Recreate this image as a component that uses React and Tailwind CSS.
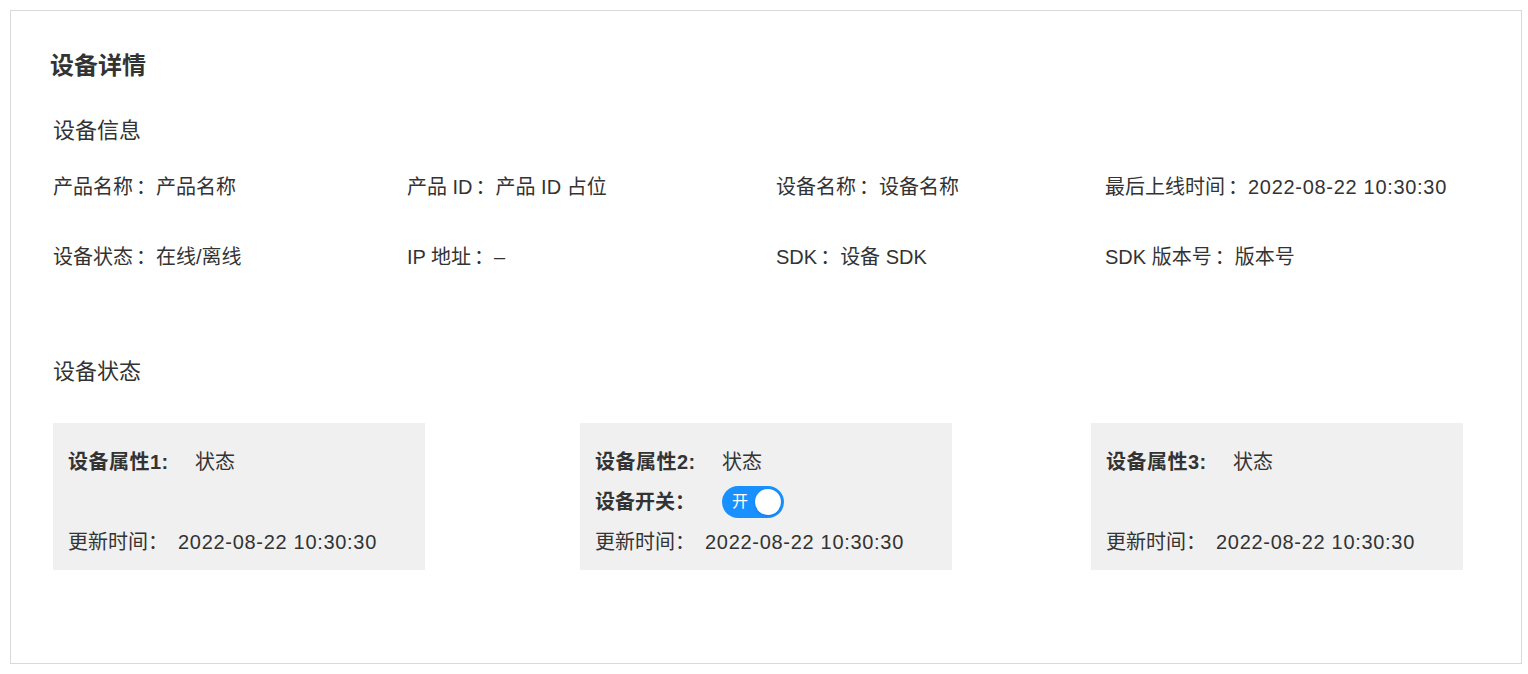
const fields = [
  { label: '产品名称', value: '产品名称' },
  { label: '产品 ID', value: '产品 ID 占位' },
  { label: '设备名称', value: '设备名称' },
  { label: '最后上线时间', value: '2022-08-22 10:30:30', isDate: true },
  { label: '设备状态', value: '在线/离线' },
  { label: 'IP 地址', value: '–' },
  { label: 'SDK', value: '设备 SDK' },
  { label: 'SDK 版本号', value: '版本号' },
];

const props = [
  { name: '设备属性1:', status: '状态', hasSwitch: false },
  { name: '设备属性2:', status: '状态', hasSwitch: true },
  { name: '设备属性3:', status: '状态', hasSwitch: false },
];

function Switch({ checked }) {
  return (
    <button
      type="button"
      className={`flex h-[32px] w-[62px] items-center rounded-full px-[3px] ${
        checked ? 'bg-[#1890ff]' : 'bg-[#bfbfbf]'
      }`}
    >
      <span className="ml-[7px] flex-1 text-left text-[16px] leading-none text-white">开</span>
      <span className="h-[26px] w-[26px] rounded-full bg-white shadow-sm" />
    </button>
  );
}

function PropCard({ item, className = '' }) {
  return (
    <div className={`h-[147px] w-[372px] bg-[#f0f0f0] px-[15px] pt-[19px] ${className}`}>
      <div className="flex h-[40px] items-center">
        <span className="w-[127px] font-bold tracking-[0.5px]">{item.name}</span>
        <span>{item.status}</span>
      </div>
      <div className="flex h-[40px] items-center">
        {item.hasSwitch && (
          <>
            <span className="w-[127px] font-bold">设备开关：</span>
            <Switch checked />
          </>
        )}
      </div>
      <div className="flex h-[40px] items-center">
        <span>更新时间：</span>
        <span className="ml-[10px] tracking-[0.7px]">2022-08-22 10:30:30</span>
      </div>
    </div>
  );
}

export default function App() {
  return (
    <div
      className="bg-white py-[10px] pl-[10px] pr-[6px] text-[#333]"
      style={{ fontFamily: '"Liberation Sans", "Noto Sans CJK SC", sans-serif' }}
    >
      <div className="h-[654px] border border-[#d9d9d9]">
        <h1 className="pl-[39px] pt-[39px] text-[24px] font-bold leading-[32px]">设备详情</h1>

        <div className="pl-[42px]">
          <h2 className="mt-[33px] text-[22px] leading-[32px]">设备信息</h2>

          <div className="mt-[25px] grid grid-cols-[354px_369px_329px_1fr] gap-y-[40px] text-[20px] leading-[30px]">
            {fields.map((f) => (
              <div key={f.label} className="whitespace-nowrap">
                <span>{f.label}</span>
                <span className="ml-[3px]">：</span>
                <span className={f.isDate ? 'tracking-[0.7px]' : ''}>{f.value}</span>
              </div>
            ))}
          </div>

          <h2 className="mt-[84px] text-[22px] leading-[32px]">设备状态</h2>

          <div className="mt-[35px] flex text-[20px]">
            <PropCard item={props[0]} />
            <PropCard item={props[1]} className="ml-[155px]" />
            <PropCard item={props[2]} className="ml-[139px]" />
          </div>
        </div>
      </div>
    </div>
  );
}
